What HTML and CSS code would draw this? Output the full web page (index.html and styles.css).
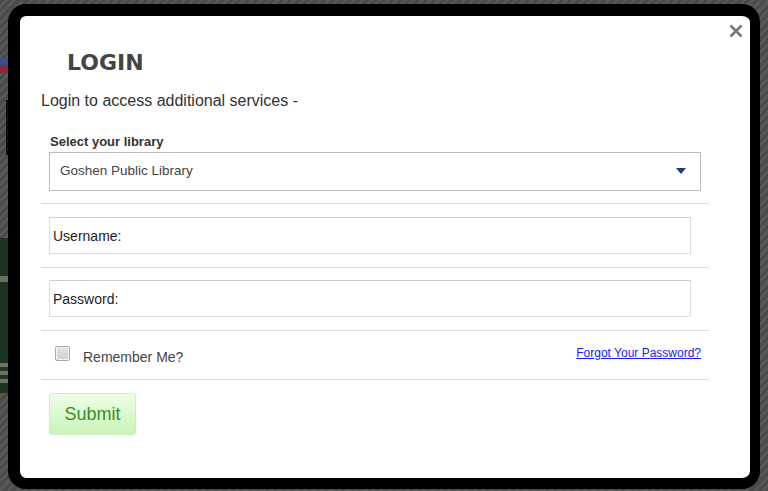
FILE: index.html
```html
<!DOCTYPE html>
<html>
<head>
<meta charset="utf-8">
<link rel="stylesheet" href="styles.css">
</head>
<body>
<div class="backdrop">
  <div class="bg-flag"></div>
  <div class="bg-mark"></div>
  <div class="bg-green"></div>
  <div class="modal">
    <button class="close" aria-label="Close">
      <svg width="14" height="14" viewBox="0 0 14 14"><path d="M1.5 1.5L12.5 12.5M12.5 1.5L1.5 12.5" stroke="#777" stroke-width="2.6" stroke-linecap="butt"/></svg>
    </button>
    <h1 class="title">LOGIN</h1>
    <p class="intro">Login to access additional services -</p>
    <div class="group group-select">
      <label class="lbl">Select your library</label>
      <div class="select">
        <span>Goshen Public Library</span>
        <svg class="caret" width="10" height="6" viewBox="0 0 10 6"><path d="M0 0H10L5 6Z" fill="#1d3f6e"/></svg>
      </div>
    </div>
    <div class="group group-user">
      <input class="field" type="text" placeholder="Username:">
    </div>
    <div class="group group-pass">
      <input class="field" type="password" placeholder="Password:">
    </div>
    <div class="group row-remember">
      <label class="remember"><span class="box"></span><span class="remember-text">Remember Me?</span></label>
      <a class="forgot" href="#">Forgot Your Password?</a>
    </div>
    <div class="actions">
      <button class="submit">Submit</button>
    </div>
  </div>
</div>
</body>
</html>
```
FILE: styles.css
```css
html, body {
  margin: 0;
  padding: 0;
  width: 768px;
  height: 491px;
  overflow: hidden;
}
body {
  background: #4f4f4f;
  font-family: "Liberation Sans", Arial, sans-serif;
}
.backdrop {
  position: relative;
  width: 768px;
  height: 491px;
  padding: 4px 0 0 8px;
  box-sizing: border-box;
  background: repeating-linear-gradient(135deg, #4a4a4a 0 3px, #575757 3px 6px);
}
.bg-flag {
  position: absolute;
  left: 0;
  top: 58px;
  width: 9px;
  height: 15px;
  background: linear-gradient(#3d4f8a 0 45%, #8a2a35 45% 100%);
}
.bg-mark {
  position: absolute;
  left: 6px;
  top: 100px;
  width: 3px;
  height: 55px;
  background: #111;
}
.bg-green {
  position: absolute;
  left: 0;
  top: 238px;
  width: 9px;
  height: 155px;
  background: linear-gradient(#1f3324 0 38px, #6b6f6b 38px 44px, #1c3322 44px 125px, #6d706d 125px 129px, #243627 129px 133px, #6d706d 133px 137px, #243627 137px 141px, #6d706d 141px 145px, #1c3322 145px 155px);
}
.modal {
  position: relative;
  width: 752px;
  height: 485px;
  box-sizing: border-box;
  background: #fff;
  border: 12px solid #000;
  border-right-width: 10px;
  border-bottom-width: 11px;
  border-radius: 18px;
  padding: 34px 41px 0 21px;
}
.close {
  position: absolute;
  top: 8px;
  right: 7px;
  width: 14px;
  height: 14px;
  padding: 0;
  border: 0;
  background: none;
  display: flex;
}
.title {
  margin: 0 0 16px 26px;
  font-family: "DejaVu Sans", Verdana, sans-serif;
  font-weight: bold;
  font-size: 22px;
  line-height: 26px;
  color: #444;
}
.intro {
  margin: 0;
  font-size: 16px;
  line-height: 18px;
  color: #333;
}
.group {
  border-bottom: 1px solid #dcdcdc;
  padding-left: 8px;
}
.group-select {
  margin-top: 24px;
  padding-right: 8px;
  padding-bottom: 12px;
}
.lbl {
  display: block;
  margin: 0 0 2px 1px;
  font-size: 13px;
  font-weight: bold;
  line-height: 16px;
  color: #333;
}
.select {
  height: 39px;
  box-sizing: border-box;
  border: 1px solid #bdbdbd;
  display: flex;
  align-items: center;
  justify-content: space-between;
  padding: 0 14px 2px 10px;
  font-size: 13.5px;
  color: #444;
  background: #fff;
}
.caret {
  display: block;
}
.group-user {
  padding-top: 13px;
  padding-bottom: 13px;
}
.group-pass {
  padding-top: 12px;
  padding-bottom: 13px;
}
.field {
  display: block;
  width: 642px;
  height: 37px;
  box-sizing: border-box;
  margin: 0;
  border: 1px solid #dedede;
  border-top-color: #cfcfcf;
  padding: 0 3px;
  font-family: "Liberation Sans", Arial, sans-serif;
  font-size: 14px;
  color: #222;
  background: #fff;
  outline: none;
}
.field::placeholder {
  color: #222;
  opacity: 1;
}
.row-remember {
  height: 49px;
  box-sizing: border-box;
  display: flex;
  justify-content: space-between;
  align-items: flex-start;
  padding: 15px 8px 0 14px;
}
.remember {
  display: flex;
  align-items: flex-start;
}
.box {
  width: 15px;
  height: 15px;
  box-sizing: border-box;
  border: 1px solid #a9a9a9;
  border-radius: 2px;
  background: linear-gradient(#e4e4e4, #cfcfcf);
  box-shadow: inset 0 0 0 1px #f2f2f2;
}
.remember-text {
  margin-left: 13px;
  margin-top: 3px;
  font-size: 14px;
  line-height: 16px;
  color: #444;
}
.forgot {
  margin-top: 0;
  font-size: 12px;
  line-height: 14px;
  color: #1a1aff;
  text-decoration: underline;
}
.actions {
  padding: 13px 0 0 8px;
}
.submit {
  width: 87px;
  height: 42px;
  box-sizing: border-box;
  border: 1px solid #cdeec0;
  border-radius: 3px;
  background: linear-gradient(#eefde8, #c9f4b7);
  font-family: "Liberation Sans", Arial, sans-serif;
  font-size: 18px;
  color: #3b8c25;
  padding: 0;
}
```
